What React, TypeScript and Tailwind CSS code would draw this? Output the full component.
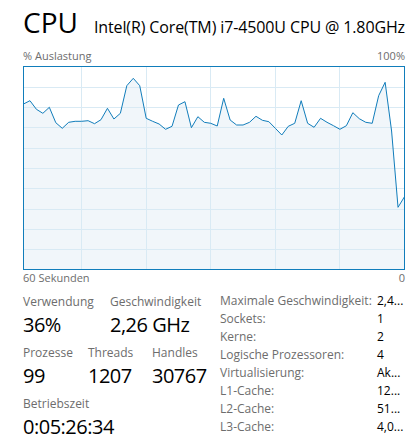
import React from "react";

const ys = [99,95.7,104.3,108.3,102.3,117.7,123.3,117.3,116.3,116.3,115.7,118.7,114.7,103.3,114,108.3,80.7,73.3,80.7,113.3,116.3,119,124.3,121.3,100,96.7,122.7,111.7,117.3,118.3,121,93.3,115,120,120,117.3,111.3,115.3,116.7,123.3,130,121.3,118.3,95.7,118.3,122.3,113.3,117.3,120.7,124.3,120.7,107.7,113.7,117.3,118.3,90.7,77.3,126,202.3,191.7];

function Chart() {
  const step = 381 / 59;
  const pts = ys.map((y, i) => [0.5 + i * step, y - 61] as const);
  const line = pts.map(([x, y]) => `${x.toFixed(2)},${y.toFixed(2)}`).join(" ");
  const area = `0.5,203.5 ${line} 381.5,203.5`;
  const vx = [58.5, 123.5, 187.5, 252.5, 316.5];
  const hy = [21.5, 41.5, 61.5, 82.5, 102.5, 122.5, 143.5, 163.5, 183.5];
  return (
    <svg width="382" height="204" viewBox="0 0 382 204" className="block">
      <rect x="0" y="0" width="382" height="204" fill="#ffffff" />
      <polygon points={area} fill="#f1f6fa" />
      {vx.map((x) => (
        <line key={"v" + x} x1={x} y1={0} x2={x} y2={204} stroke="#d9eaf4" strokeWidth="1" />
      ))}
      {hy.map((y) => (
        <line key={"h" + y} x1={0} y1={y} x2={382} y2={y} stroke="#d9eaf4" strokeWidth="1" />
      ))}
      <polyline points={line} fill="none" stroke="#117dbb" strokeWidth="1" strokeLinejoin="miter" />
      <rect x="0.5" y="0.5" width="381" height="203" fill="none" stroke="#117dbb" strokeWidth="1" />
    </svg>
  );
}

function Stat({ label, value }: { label: string; value: string }) {
  return (
    <div className="flex flex-col">
      <div className="text-[12px] leading-[18px] text-[#6d6d6d]">{label}</div>
      <div className="text-[20px] leading-[27px] tracking-[-0.5px] text-black">{value}</div>
    </div>
  );
}

const rows: [string, string][] = [
  ["Maximale Geschwindigkeit:", "2,4..."],
  ["Sockets:", "1"],
  ["Kerne:", "2"],
  ["Logische Prozessoren:", "4"],
  ["Virtualisierung:", "Ak..."],
  ["L1-Cache:", "12..."],
  ["L2-Cache:", "51..."],
  ["L3-Cache:", "4,0..."],
];

export default function App() {
  return (
    <div
      className="w-[418px] h-[447px] bg-white overflow-hidden pl-[23px] pt-[8px]"
      style={{ fontFamily: '"Segoe UI", "Open Sans", "Noto Sans", sans-serif' }}
    >
      <div className="w-[382px] flex items-baseline justify-between">
        <div className="text-[28px] leading-[28px] text-black">CPU</div>
        <div className="text-[16px] leading-[28px] tracking-[-0.12px] text-black">Intel(R) Core(TM) i7-4500U CPU @ 1.80GHz</div>
      </div>
      <div className="w-[382px] mt-[8px] flex justify-between text-[11px] leading-[14px] text-[#6d6d6d]">
        <span>% Auslastung</span>
        <span>100%</span>
      </div>
      <div className="mt-[3px]">
        <Chart />
      </div>
      <div className="w-[382px] mt-[1px] flex justify-between text-[11px] leading-[14px] text-[#6d6d6d]">
        <span>60 Sekunden</span>
        <span>0</span>
      </div>
      <div className="mt-[8px] flex">
        <div className="w-[197px] flex flex-col gap-[6px]">
          <div className="flex">
            <div className="w-[87px]"><Stat label="Verwendung" value="36%" /></div>
            <Stat label="Geschwindigkeit" value="2,26 GHz" />
          </div>
          <div className="flex">
            <div className="w-[65px]"><Stat label="Prozesse" value="99" /></div>
            <div className="w-[64px]"><Stat label="Threads" value="1207" /></div>
            <Stat label="Handles" value="30767" />
          </div>
          <Stat label="Betriebszeit" value="0:05:26:34" />
        </div>
        <div className="flex flex-col text-[12px] leading-[18px] -mt-[1px]">
          {rows.map(([l, v]) => (
            <div key={l} className="flex">
              <div className="w-[157px] text-[#6d6d6d] whitespace-nowrap">{l}</div>
              <div className="text-black whitespace-nowrap">{v}</div>
            </div>
          ))}
        </div>
      </div>
    </div>
  );
}
